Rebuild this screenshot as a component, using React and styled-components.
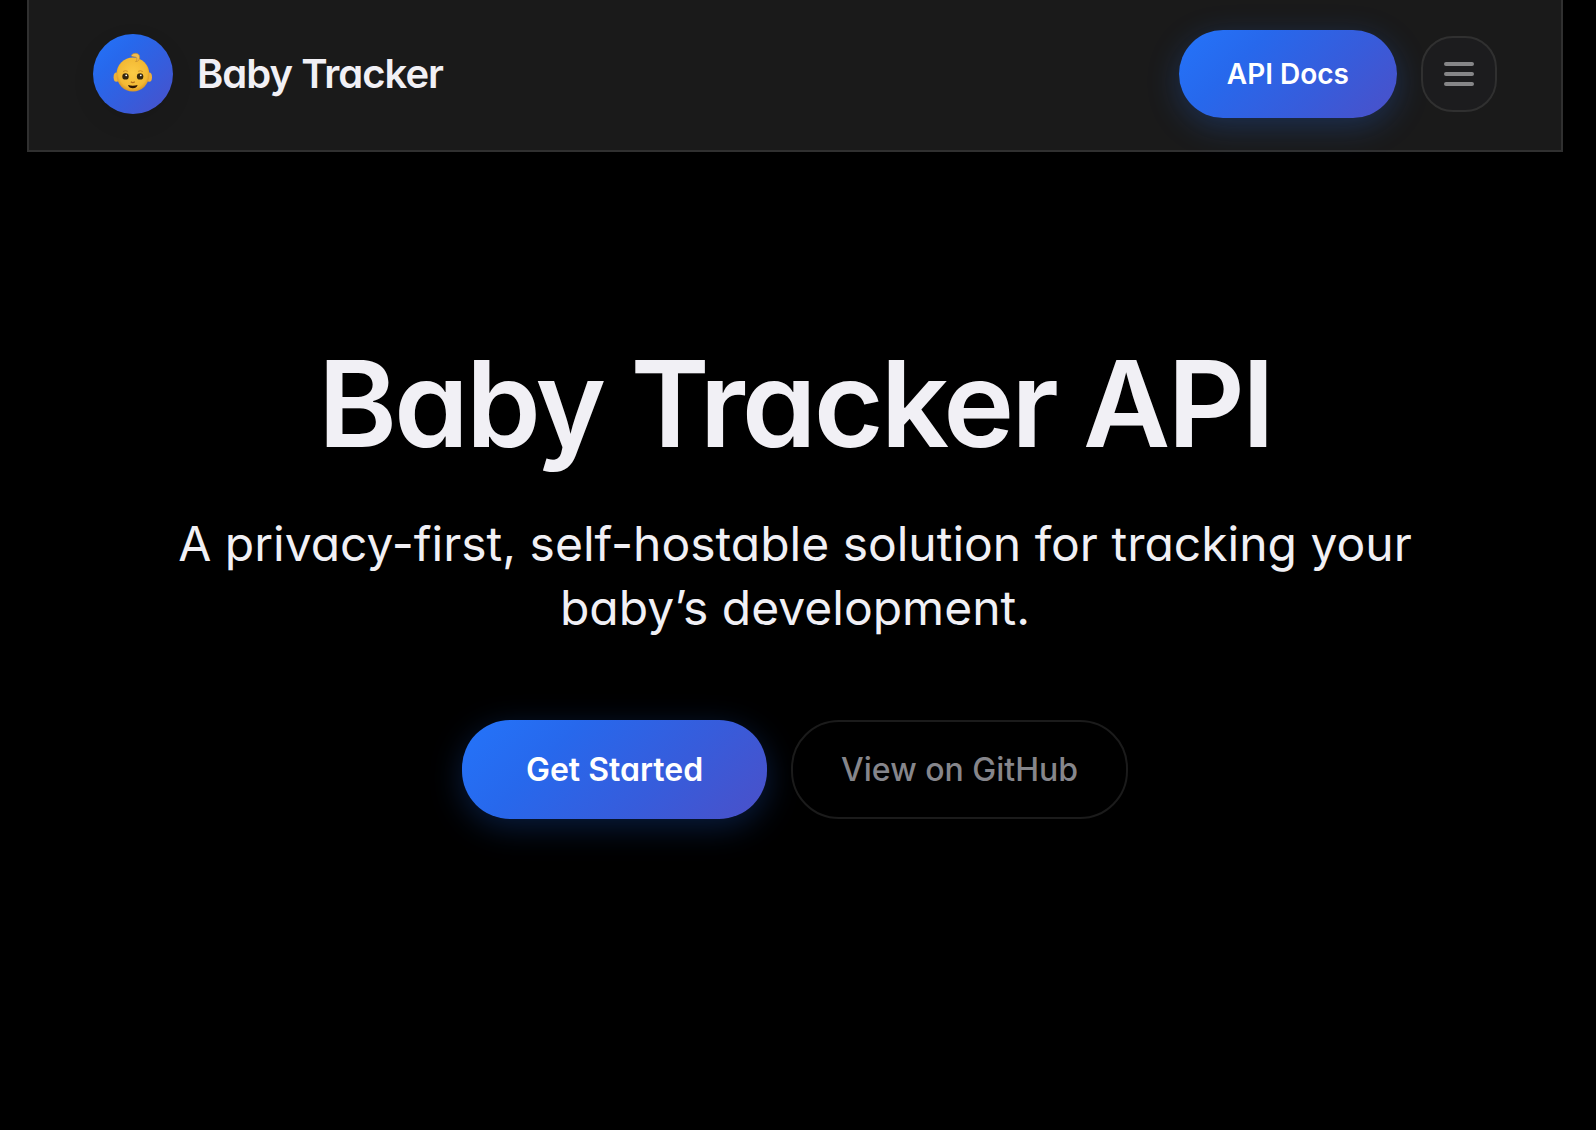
import React from "react";
import styled, { createGlobalStyle } from "styled-components";

const GlobalStyle = createGlobalStyle`
  *, *::before, *::after { box-sizing: border-box; }
  body {
    margin: 0;
    background: #000;
    color: #f1f0f5;
    font-family: Inter, "Liberation Sans", sans-serif;
    font-feature-settings: "cv11";
    -webkit-font-smoothing: antialiased;
  }
`;

const brandGradient =
  "linear-gradient(135deg, #2474fa 0%, #2768ec 30%, #375cdb 65%, #4b50c8 100%)";

const Page = styled.div`
  min-height: 100vh;
  padding-right: 6px;
`;

const Header = styled.header`
  display: flex;
  align-items: center;
  justify-content: space-between;
  max-width: 1536px;
  margin: 0 auto;
  padding: 30px 64px 32px;
  background: #1a1a1a;
  border: 2px solid #303030;
  border-top: 0;
`;

const Brand = styled.a`
  display: flex;
  align-items: center;
  gap: 24px;
  color: inherit;
  font-size: 40px;
  font-weight: 600;
  line-height: 56px;
  letter-spacing: -0.025em;
  text-decoration: none;
`;

const Logo = styled.span`
  display: grid;
  place-items: center;
  width: 80px;
  height: 80px;
  border-radius: 50%;
  background: ${brandGradient};
  box-shadow: 0 8px 24px rgba(0, 0, 0, 0.08);
`;

const Actions = styled.div`
  display: flex;
  align-items: center;
  justify-content: center;
  gap: 24px;
`;

const PrimaryLink = styled.a`
  padding: ${(p) => (p.$large ? "24px 64px" : "24px 48px")};
  border-radius: 48px;
  background: ${brandGradient};
  box-shadow: 0 8px 32px rgba(36, 116, 255, 0.25);
  color: #fff;
  font-size: ${(p) => (p.$large ? "32px" : "28px")};
  font-weight: 600;
  line-height: ${(p) => (p.$large ? "51px" : "40px")};
  text-decoration: none;
`;

const OutlineLink = styled.a`
  padding: 22px 48px;
  border: 2px solid #1b1b1b;
  border-radius: 48px;
  color: #86868b;
  font-size: 32px;
  font-weight: 500;
  line-height: 51px;
  text-decoration: none;
`;

const MenuButton = styled.button`
  display: grid;
  place-items: center;
  width: 76px;
  height: 76px;
  padding: 0;
  border: 2px solid #303030;
  border-radius: 32px;
  background: #1c1c1e;
  color: #868688;
`;

const Hero = styled.main`
  display: flex;
  flex-direction: column;
  align-items: center;
  max-width: 1344px;
  margin: 0 auto;
  padding: 177px 48px;
  text-align: center;
`;

const Title = styled.h1`
  margin: 0;
  font-size: 120px;
  font-weight: 600;
  line-height: 150px;
  letter-spacing: -0.025em;
`;

const Lead = styled.p`
  margin: 33px 0 80px;
  font-size: 48px;
  font-weight: 400;
  line-height: 64px;
`;

function BabyFace() {
  return (
    <svg width="40" height="44" viewBox="0 -2 40 44" aria-hidden="true">
      <defs>
        <radialGradient id="skin" cx="50%" cy="45%" r="55%">
          <stop offset="0" stopColor="#fccb45" />
          <stop offset="0.8" stopColor="#f3b934" />
          <stop offset="1" stopColor="#d89526" />
        </radialGradient>
      </defs>
      <ellipse cx="3.4" cy="23.2" rx="2.8" ry="4.6" fill="#eeb03a" />
      <ellipse cx="36.2" cy="23.2" rx="2.8" ry="4.6" fill="#eeb03a" />
      <rect x="3.6" y="3.4" width="32.6" height="34" rx="16.3" fill="url(#skin)" />
      <path d="M18.2 1.6C20.2-1.8 26.8-1.6 26.6 3.4c-.1 2.6-1.8 4.4-4 4.2 1.7-1.6 1.9-4.4-.8-4.6-1.4-.1-2.8-.4-3.6-1.4Z" fill="#f0bc50" stroke="#c28a2a" strokeWidth=".7" />
      <path d="M10 17.6q2.3-1.8 4.8-.2M25 17.4q2.5-1.6 4.8.2" fill="none" stroke="#d0922a" />
      <circle cx="12.5" cy="22.4" r="3.2" fill="#35260d" />
      <circle cx="27.1" cy="22.4" r="3.2" fill="#35260d" />
      <circle cx="13.2" cy="21.3" r=".9" fill="#fff" />
      <circle cx="27.8" cy="21.3" r=".9" fill="#fff" />
      <path d="M17.8 27.8q2 1.6 4 0" fill="none" stroke="#b5701c" strokeWidth="1.2" />
      <path d="M15 31q4.8 1.3 9.6 0-1 3.3-4.8 3.3T15 31Z" fill="#2b1403" />
    </svg>
  );
}

function MenuIcon() {
  return (
    <svg width="30" height="24" viewBox="0 0 30 24" aria-hidden="true">
      <path d="M2 2h26M2 12h26M2 22h26" stroke="currentColor" strokeWidth="4" strokeLinecap="round" />
    </svg>
  );
}

export default function App() {
  return (
    <Page>
      <GlobalStyle />
      <Header>
        <Brand href="#">
          <Logo><BabyFace /></Logo>
          Baby Tracker
        </Brand>
        <Actions>
          <PrimaryLink href="#docs">API Docs</PrimaryLink>
          <MenuButton type="button" aria-label="Menu"><MenuIcon /></MenuButton>
        </Actions>
      </Header>
      <Hero>
        <Title>Baby Tracker API</Title>
        <Lead>A privacy-first, self-hostable solution for tracking your baby’s development.</Lead>
        <Actions>
          <PrimaryLink $large href="#start">Get Started</PrimaryLink>
          <OutlineLink href="#github">View on GitHub</OutlineLink>
        </Actions>
      </Hero>
    </Page>
  );
}
